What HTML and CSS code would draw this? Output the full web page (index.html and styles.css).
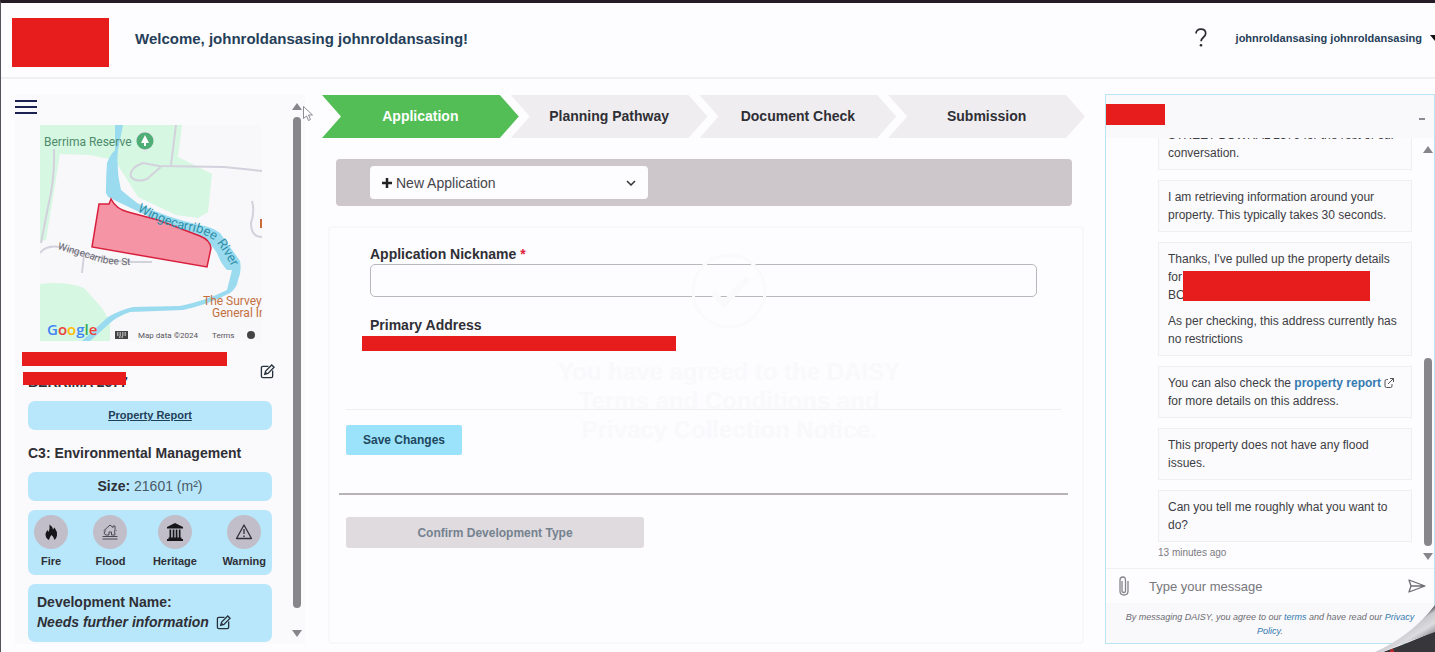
FILE: index.html
```html
<!DOCTYPE html>
<html lang="en">
<head>
    <meta charset="utf-8">
    <title>New Application</title>
    <link rel="stylesheet" href="styles.css">
</head>
<body>
    <header class="topbar">
        <div class="logo"></div>
        <h1 class="welcome">Welcome, johnroldansasing johnroldansasing!</h1>
        <button class="help" aria-label="Help">
            <svg width="14" height="20" viewBox="0 0 14 20"><path d="M2 5.500C2 2.800 4 1.200 6.800 1.200s4.900 1.600 4.900 4.300c0 3.600-4.600 3.900-4.600 7.700" fill="none" stroke="#2b2b30" stroke-width="1.700"/><circle cx="7" cy="17.200" r="1.300" fill="#2b2b30"/></svg>
        </button>
        <button class="account">johnroldansasing johnroldansasing
            <svg width="10" height="6" viewBox="0 0 10 6"><path d="M0 0h10L5 6z" fill="#111"/></svg>
        </button>
    </header>

    <main class="layout">
        <aside class="sidebar">
            <div class="sidebar-body">
                <button class="menu" aria-label="Menu">
                    <svg width="22" height="16" viewBox="0 0 22 16"><path d="M0 2h22M0 8h22M0 14h22" stroke="#1b2150" stroke-width="2"/></svg>
                </button>

                <svg class="map" viewBox="0 0 222 216">
                    <rect width="222" height="216" fill="#f8f7f9"/>
                    <path d="M0 0h142l-4 32 16 8 18 9-4 38-10 6-22-3-38-18-24-38-10-1-14-3-30-1-14 86-6 1z" fill="#d6f7e2"/>
                    <path d="M0 159q26-3 44 4l18 20 8 14v19H0z" fill="#d6f7e2"/>
                    <g fill="none" stroke="#d3d2dc" stroke-width="2">
                        <path d="M14 24q1 30-6 58L1 118M0 128q6-8 20-6l24 7 40 8h28M44 130l-2 18"/>
                        <path d="M136 0l-5 40M222 46l-38-4-65-1-16-3q-14 5-12 14 6 6 16 2l15-13M212 76q3 10-1 22 0 14 11 14"/>
                    </g>
                    <path d="M75 0h8l-5 25q-2 20 3 40l16 13q30 15 63 22 12 2 20 8l20 28q2 10-2 19-1 8-8 13-20 11-47 17l-53 2q-12 4-20 11l-20 18h-8l26-24q12-7 25-10l47-1q25-5 47-16l5-20h-5q-6-6-10-17-7-11-17-16-20-10-40-15L70 73q-5-3-4-9 0-14 1-26 3-8 8-13z" fill="#9adbf0"/>
                    <path d="M59 79h10l2-5q5 10 17 13l30 8 42 16q10 4 11 12l-4 19-115-20z" fill="#f594a4" stroke="#d91f3c" stroke-width="1.500"/>
                    <path d="M105 27q-9-6-9-12a9 9 0 0 1 18 0q0 6-9 12z" fill="#e3e6e9"/>
                    <circle cx="105" cy="16" r="8.500" fill="#4eae75"/>
                    <path d="M105 10l4 8h-3v3h-2v-3h-3z" fill="#fff"/>
                    <text x="4" y="21" class="map-park">Berrima Reserve</text>
                    <path id="river" d="M97 86q25 14 48 19 22 3 32 13 10 14 18 30" fill="none"/>
                    <text class="map-river"><textPath href="#river">Wingecarribee River</textPath></text>
                    <path id="street" d="M17 124q20 6 34 10 14 7 48 6" fill="none"/>
                    <text class="map-street"><textPath href="#street">Wingecarribee St</textPath></text>
                    <text x="163" y="180" class="map-poi">The Survey</text>
                    <text x="172" y="192" class="map-poi">General In</text>
                    <path d="M221 94v9" stroke="#c96b3a" stroke-width="2"/>
                    <text x="7" y="210" class="map-google"><tspan fill="#4285f4">G</tspan><tspan fill="#ea4335">o</tspan><tspan fill="#fbbc05">o</tspan><tspan fill="#4285f4">g</tspan><tspan fill="#34a853">l</tspan><tspan fill="#ea4335">e</tspan></text>
                    <rect x="75" y="206" width="13" height="8" fill="#444"/>
                    <path d="M77 208h9M77 210h9M79 212h5" stroke="#fff" stroke-dasharray="1.500 1"/>
                    <text x="98" y="213" class="map-small">Map data ©2024</text>
                    <text x="172" y="213" class="map-small">Terms</text>
                    <circle cx="211" cy="210" r="4" fill="#444"/>
                </svg>

                <div class="address">
                    <div class="address-lines">
                        <div class="redacted line-one"></div>
                        <div class="town">BERRIMA 2577<span class="redacted line-two"></span></div>
                    </div>
                    <button class="edit" aria-label="Edit address"><svg width="15" height="15" viewBox="0 0 16 16"><use href="#pen"/></svg></button>
                </div>

                <a class="panel report" href="#">Property Report</a>
                <h2 class="zone">C3: Environmental Management</h2>
                <div class="panel size"><b>Size:</b> 21601 (m²)</div>

                <ul class="panel hazards">
                    <li><span class="dot"><svg width="18" height="18" viewBox="0 0 18 18"><path d="M7.500 1.500q3 2 3.500 5l1.500-2q3 4 2.500 8-.5 3-2.500 4.500-.5-3-3-5-2 2-2.500 5-3.500-1.500-3.500-6 .5-2 2-4l1 2q1.500-3 1-7.500z" fill="#16161a"/></svg></span>Fire</li>
                    <li><span class="dot"><svg width="18" height="18" viewBox="0 0 18 18"><path d="M2.500 8L9 2l3 2.500V3h2v3.500L15.500 8M4.500 7.500L3 10.500l2 1.500h3V9h2.500v3H14l-.500-4.500M1.500 13.500h15M1.500 16h15" fill="none" stroke="#4a4a52"/></svg></span>Flood</li>
                    <li><span class="dot"><svg width="18" height="18" viewBox="0 0 18 18"><path d="M9 0l8 4v1.500H1V4zM3.500 6.500h1.700v8H3.500zM6.700 6.500h1.700v8H6.700zM9.700 6.500h1.700v8H9.700zM12.800 6.500h1.700v8h-1.700zM2.500 14.500h13V16H17v2H1v-2h1.500z" fill="#16161a"/></svg></span>Heritage</li>
                    <li><span class="dot"><svg width="18" height="18" viewBox="0 0 18 18"><path d="M9 2l7.500 13.500h-15z" fill="none" stroke="#2f2f38" stroke-width="1.300" stroke-linejoin="round"/><path d="M9 6v5M9 12.500v1.500" stroke="#2f2f38" stroke-width="1.300"/></svg></span>Warning</li>
                </ul>

                <div class="panel development">
                    <div>Development Name:</div>
                    <div class="development-name"><i>Needs further information</i>
                        <button class="edit" aria-label="Edit development name"><svg width="15" height="15" viewBox="0 0 16 16"><g id="pen"><path d="M9 2.500H3Q1.500 2.500 1.500 4v9q0 1.500 1.500 1.500h9q1.500 0 1.500-1.500V7" fill="none" stroke="#26323c" stroke-width="1.400"/><path d="M5 11l1-3.500L12.500 1l2.500 2.500L8.500 10z" fill="none" stroke="#26323c" stroke-width="1.400"/><path d="M5 11l1-3 2 2z" fill="#26323c"/></g></svg></button>
                    </div>
                </div>
            </div>
            <div class="scrollbar">
                <span class="arrow-up"></span><span class="thumb"></span><span class="arrow-down"></span>
            </div>
            <svg class="cursor" width="12" height="18" viewBox="0 0 12 18"><path d="M1.500 1.500v12l3-2.500 2 4.500 2-1-2-4.500h4z" fill="#fff" stroke="#8b8b92"/></svg>
        </aside>

        <section class="content">
            <ol class="steps">
                <li class="step active">Application</li>
                <li class="step">Planning Pathway</li>
                <li class="step">Document Check</li>
                <li class="step">Submission</li>
            </ol>

            <div class="toolbar">
                <div class="picker">
                    <svg width="10" height="10" viewBox="0 0 10 10"><path d="M5 0v10M0 5h10" stroke="#222" stroke-width="2.500"/></svg>
                    <select aria-label="Application">
                        <option>New Application</option>
                    </select>
                    <svg width="10" height="6" viewBox="0 0 10 6"><path d="M1 1l4 4 4-4" fill="none" stroke="#333" stroke-width="1.500"/></svg>
                </div>
            </div>

            <form class="card">
                <div class="fields">
                    <label for="nickname">Application Nickname <span class="required">*</span></label>
                    <input type="text" id="nickname" required>
                    <div class="field-title">Primary Address</div>
                    <div class="redacted primary-address"></div>
                </div>
                <hr class="thin">
                <button type="submit" class="save">Save Changes</button>
                <hr class="thick">
                <button type="button" class="confirm" disabled>Confirm Development Type</button>

                <!-- notice fading out -->
                <div class="notice">
                    <svg width="76" height="76" viewBox="0 0 76 76"><circle cx="38" cy="38" r="36" fill="none" stroke="#fafafd" stroke-width="3"/><path d="M22 40l11 11 24-26" fill="none" stroke="#fafafd" stroke-width="6"/></svg>
                    <p>You have agreed to the DAISY<br>Terms and Conditions and<br>Privacy Collection Notice.</p>
                </div>
            </form>
        </section>

        <aside class="chat">
            <div class="chat-header">
                <div class="redacted chat-name"></div>
                <button class="minimise" aria-label="Minimise"></button>
            </div>
            <div class="chat-body">
                <div class="messages">
                    <div class="message">STREET BOWRAL 2576 for the rest of our conversation.</div>
                    <div class="message">I am retrieving information around your property. This typically takes 30 seconds.</div>
                    <div class="message">
                        <p>Thanks, I've pulled up the property details<br>for<br>BO<span class="redacted message-address"></span></p>
                        <p>As per checking, this address currently has no restrictions</p>
                    </div>
                    <div class="message">You can also check the <a href="#"><b>property report</b></a>
                        <svg width="10" height="10" viewBox="0 0 10 10"><path d="M4 1.500H2.500q-1.500 0-1.500 1.500v5q0 1.500 1.500 1.500h4Q8 9.500 8 8V6M6 .5h3.500V4M9.500 .5L4 6" fill="none" stroke="#555"/></svg>
                        for more details on this address.</div>
                    <div class="message">This property does not have any flood issues.</div>
                    <div class="message">Can you tell me roughly what you want to do?</div>
                    <time>13 minutes ago</time>
                </div>
                <div class="scrollbar chat-scroll">
                    <span class="arrow-up"></span><span class="thumb"></span><span class="arrow-down"></span>
                </div>
            </div>
            <form class="compose">
                <button type="button" aria-label="Attach file"><svg width="10" height="20" viewBox="0 0 10 20"><path d="M3 5v9.500q0 2 1.800 2t1.700-2V4q0-3-2.700-3T1 4v11q0 4 4 4t4-4V5" fill="none" stroke="#85858a" stroke-width="1.300"/></svg></button>
                <input type="text" placeholder="Type your message" aria-label="Type your message">
                <button type="submit" aria-label="Send"><svg width="18" height="14" viewBox="0 0 18 14"><path d="M1 1l16 6L1 13l2-6zM3 7h14" fill="none" stroke="#6d6d72" stroke-width="1.300" stroke-linejoin="round"/></svg></button>
            </form>
            <p class="terms">By messaging DAISY, you agree to our <a href="#">terms</a> and have read our <a href="#">Privacy Policy</a>.</p>
        </aside>
    </main>

    <svg class="page-curl" width="60" height="48" viewBox="0 0 60 48">
        <defs>
            <linearGradient id="curl" gradientUnits="userSpaceOnUse" x1="30" y1="22" x2="44" y2="44">
                <stop offset="0" stop-color="#6f6f74"/><stop offset=".15" stop-color="#c9c9cd"/><stop offset=".5" stop-color="#dcdcdf"/><stop offset="1" stop-color="#77777c"/>
            </linearGradient>
        </defs>
        <path d="M8 48Q36 38 60 27v21z" fill="#37373b"/>
        <path d="M0 48Q36 32 60 1v27Q36 36 8 48z" fill="url(#curl)"/>
        <circle cx="17" cy="47" r="2" fill="#c4262e"/>
    </svg>
</body>
</html>
```
FILE: styles.css
```css
* {
    box-sizing: border-box;
}
body {
    margin: 0;
    height: 100vh;
    display: flex;
    flex-direction: column;
    position: relative;
    overflow: hidden;
    background: #fdfcfe;
    border-top: 3px solid #241c26;
    border-left: 1px solid #55525c;
    font-family: "Liberation Sans", Arial, sans-serif;
    font-size: 14px;
    color: #2f2f36;
}
button {
    border: none;
    background: none;
    padding: 0;
    font-family: inherit;
    cursor: pointer;
}
svg {
    display: block;
    flex: none;
}
.redacted {
    background: #e71c1c;
}

/* top bar */
.topbar {
    display: flex;
    align-items: center;
    height: 76px;
    padding: 0 0 4px 11px;
    border-bottom: 2px solid #f1eff2;
}
.logo {
    width: 97px;
    height: 49px;
    margin-top: 8px;
    background: #e71c1c;
}
.welcome {
    flex: 1;
    margin: 0 0 0 26px;
    font-size: 15px;
    color: #263f59;
}
.help {
    margin-right: 28px;
}
.account {
    display: flex;
    align-items: center;
    gap: 8px;
    margin-right: -5px;
    font-size: 11px;
    font-weight: bold;
    color: #263f59;
}

.layout {
    flex: 1;
    min-height: 0;
    display: flex;
    padding: 15px 0 8px 14px;
}

/* sidebar */
.sidebar {
    position: relative;
    display: flex;
    width: 290px;
    background: #faf9fb;
}
.sidebar-body {
    flex: 1;
    padding: 5px 16px 0 13px;
}
.menu {
    display: block;
    margin-left: -13px;
}
.map {
    width: 222px;
    height: 216px;
    margin: 10px 0 0 12px;
}
.map-park, .map-river, .map-street, .map-poi, .map-small {
    font-family: Roboto, sans-serif;
}
.map-park {
    font-size: 12px;
    fill: #4c8a6b;
}
.map-river {
    font-size: 13px;
    fill: #2f8fa8;
}
.map-street {
    font-size: 10px;
    fill: #66666e;
}
.map-poi {
    font-size: 12px;
    fill: #c4703f;
}
.map-google {
    font-family: "Open Sans", sans-serif;
    font-size: 15px;
    font-weight: 600;
}
.map-small {
    font-size: 8px;
    fill: #55555c;
}
.address {
    display: flex;
    align-items: center;
    justify-content: space-between;
    height: 60px;
    margin: 0 -3px 0 -6px;
}
.line-one {
    width: 205px;
    height: 14px;
}
.town {
    position: relative;
    padding: 8px 0 0 6px;
    font-size: 14px;
    line-height: 17px;
    font-weight: bold;
}
.line-two {
    position: absolute;
    left: 1px;
    top: 6px;
    width: 103px;
    height: 13px;
}
.panel {
    display: block;
    margin: 0;
    border-radius: 7px;
    background: #b8e7fb;
}
.report {
    height: 29px;
    line-height: 28px;
    text-align: center;
    font-size: 11px;
    font-weight: bold;
    color: #1f4058;
}
.zone {
    margin: 14px 0 10px;
    font-size: 14px;
    line-height: 18px;
}
.size {
    height: 29px;
    line-height: 29px;
    text-align: center;
    color: #4b5a66;
}
.size b {
    color: #2f2f36;
}
.hazards {
    display: flex;
    justify-content: space-between;
    height: 65px;
    margin-top: 9px;
    padding: 5px 6px;
    list-style: none;
    font-size: 11px;
    font-weight: bold;
}
.hazards li {
    display: flex;
    flex-direction: column;
    align-items: center;
    gap: 6px;
}
.dot {
    display: grid;
    place-items: center;
    width: 34px;
    height: 34px;
    border-radius: 50%;
    background: #c1bec9;
}
.development {
    margin-top: 9px;
    height: 58px;
    padding: 8px 9px;
    font-weight: bold;
    line-height: 20px;
}
.development-name {
    display: flex;
    align-items: center;
    gap: 7px;
}

/* drawn scrollbars */
.scrollbar {
    display: flex;
    flex-direction: column;
    align-items: center;
    width: 17px;
    padding: 9px 0 7px;
    gap: 7px;
}
.thumb {
    flex: 1;
    width: 8px;
    border-radius: 4px;
    background: #87868b;
}
.arrow-up, .arrow-down {
    border: 5px solid transparent;
}
.arrow-up {
    border-top: none;
    border-bottom: 7px solid #87868b;
}
.arrow-down {
    margin-top: 15px;
    border-bottom: none;
    border-top: 7px solid #87868b;
}
.cursor {
    position: absolute;
    left: 287px;
    top: 11px;
}

/* centre column */
.content {
    flex: 1;
    display: flex;
    flex-direction: column;
    margin: 1px 20px 0 17px;
}
.steps {
    display: flex;
    margin: 0;
    padding: 0 0 0 8px;
    list-style: none;
}
.step {
    flex: 1;
    height: 43px;
    margin-left: -8px;
    line-height: 42px;
    text-align: center;
    font-weight: bold;
    background: #efedf0;
    clip-path: polygon(0 0, calc(100% - 19px) 0, 100% 50%, calc(100% - 19px) 100%, 0 100%, 19px 50%);
}
.step.active {
    background: #52be55;
    color: #fff;
}
.toolbar {
    margin: 21px 13px 20px 14px;
    padding: 7px 34px;
    border-radius: 4px;
    background: #cdc6cb;
}
.picker {
    display: flex;
    align-items: center;
    gap: 4px;
    width: 278px;
    height: 33px;
    padding: 0 12px;
    border-radius: 4px;
    background: #fdfcfe;
}
.picker select {
    flex: 1;
    appearance: none;
    border: none;
    background: none;
    font-family: inherit;
    font-size: 14px;
    color: #45454c;
}
.card {
    position: relative;
    flex: 1;
    margin: 0 1px 0 6px;
    padding: 16px 14px 0 9px;
    border: 2px solid #f8f7f9;
    border-radius: 4px;
}
.fields {
    padding: 0 31px;
    height: 165px;
}
.fields label, .field-title {
    display: block;
    font-weight: bold;
    line-height: 20px;
}
.required {
    color: #e0243c;
}
.fields input {
    display: block;
    width: 100%;
    height: 33px;
    border: 1px solid #b9b7bb;
    border-radius: 5px;
    background: transparent;
}
.field-title {
    margin-top: 18px;
}
.primary-address {
    width: 314px;
    height: 15px;
    margin: 1px 0 0 -8px;
}
hr {
    border: none;
}
.thin {
    height: 1px;
    margin: 0 7px 15px;
    background: #efeef0;
}
.save {
    display: block;
    height: 30px;
    margin-left: 7px;
    padding: 0 17px;
    border-radius: 2px;
    background: #9be3fb;
    font-size: 12px;
    font-weight: bold;
    color: #22485f;
}
.thick {
    height: 2px;
    margin: 38px 0 22px;
    background: #b7b2b5;
}
.confirm {
    width: 298px;
    height: 31px;
    margin-left: 7px;
    border-radius: 3px;
    background: #dfdbdf;
    font-size: 12px;
    font-weight: bold;
    color: #75828f;
}
.notice {
    position: absolute;
    top: 25px;
    left: 46px;
    right: 0;
    display: flex;
    flex-direction: column;
    align-items: center;
    pointer-events: none;
    text-align: center;
    font-size: 24px;
    line-height: 29px;
    font-weight: bold;
    color: #f9f9fc;
}
.notice p {
    margin: 28px 0 0;
}

/* chat */
.chat {
    display: flex;
    flex-direction: column;
    width: 330px;
    border: 1px solid #b9e5f3;
    font-size: 12px;
}
.chat a {
    color: #337ab0;
    text-decoration: none;
}
.chat-header {
    display: flex;
    justify-content: space-between;
    align-items: center;
    height: 43px;
    padding: 0 9px 5px 0;
    background: #f9f8fa;
}
.chat-name {
    width: 59px;
    height: 21px;
}
.minimise {
    width: 6px;
    height: 2px;
    margin-top: 10px;
    background: #8a8a90;
}
.chat-body {
    flex: 1;
    min-height: 0;
    display: flex;
    border-bottom: 1px solid #f1eff2;
}
.messages {
    flex: 1;
    display: flex;
    flex-direction: column;
    justify-content: flex-end;
    gap: 10px;
    overflow: hidden;
    padding: 0 9px 8px 52px;
}
.message {
    position: relative;
    flex: none;
    padding: 7px 9px;
    border: 1px solid #f0eef1;
    background: #fbfafc;
    line-height: 18px;
    color: #3d3d44;
}
.message p {
    margin: 0 0 8px;
}
.message p:last-child {
    margin: 0;
}
.message svg {
    display: inline;
    vertical-align: -1px;
}
.message-address {
    position: absolute;
    left: 24px;
    top: 28px;
    width: 187px;
    height: 30px;
}
.messages time {
    margin-top: -6px;
    font-size: 10px;
    line-height: 14px;
    color: #7b7b82;
}
.chat-scroll {
    width: 13px;
    padding: 8px 0;
}
.chat-scroll .thumb {
    margin-top: 198px;
}
.chat-scroll .arrow-down {
    margin-top: 0;
}
.compose {
    display: flex;
    align-items: center;
    height: 34px;
    padding: 0 8px 0 13px;
}
.compose input {
    flex: 1;
    margin-left: 20px;
    padding: 0;
    border: none;
    outline: none;
    background: none;
    font-family: inherit;
    font-size: 13px;
}
.compose input::placeholder {
    color: #77777d;
}
.terms {
    margin: 0;
    padding: 7px 12px 5px;
    background: #f9f8fa;
    text-align: center;
    font-size: 9px;
    font-style: italic;
    line-height: 14px;
    color: #6c6c73;
}
.page-curl {
    position: absolute;
    right: 0;
    bottom: 0;
}
```
